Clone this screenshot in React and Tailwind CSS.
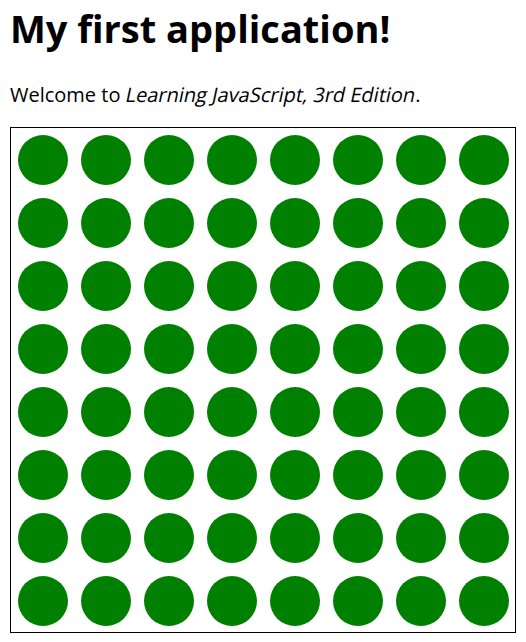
export default function App() {
  const dots = Array.from({ length: 64 }, (_, i) => i);

  return (
    <div className="min-h-screen bg-white px-[10px] text-black" style={{ fontFamily: '"Open Sans", "Noto Sans", sans-serif' }}>
      <h1 className="pt-[9px] text-[38px] font-bold leading-[38px]">My first application!</h1>
      <p className="mt-[38px] text-[20px] leading-[20px]">
        Welcome to <span className="inline-block -skew-x-12">Learning JavaScript, 3rd Edition</span>.
      </p>
      <div className="mt-[22px] w-[506px] border border-black">
        <div className="grid h-[504px] w-[504px] grid-cols-8 grid-rows-8">
          {dots.map((i) => (
            <div key={i} className="flex items-center justify-center">
              <div className="h-[50px] w-[50px] rounded-full bg-[#008000]" />
            </div>
          ))}
        </div>
      </div>
    </div>
  );
}
